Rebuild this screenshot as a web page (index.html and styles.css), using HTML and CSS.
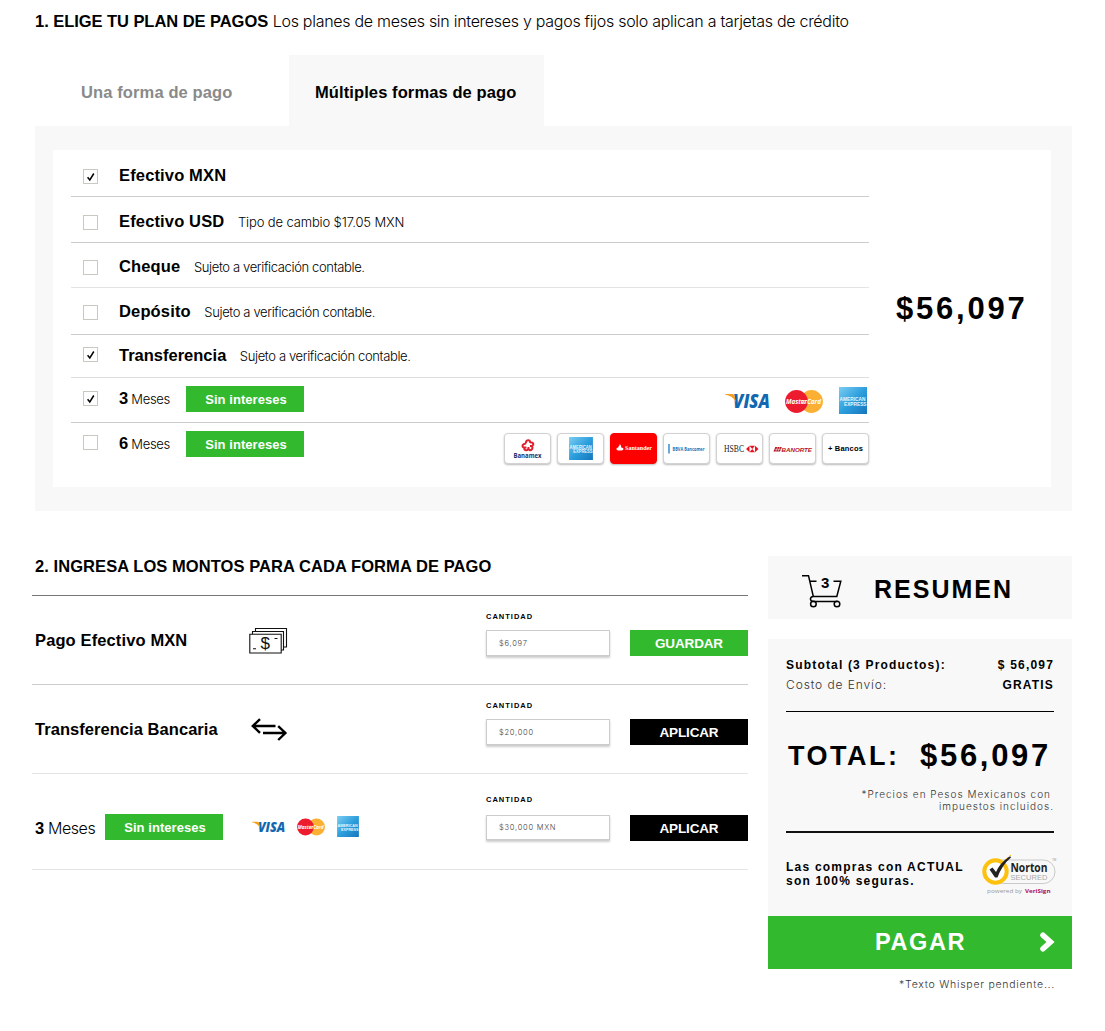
FILE: index.html
```html
<!DOCTYPE html>
<html lang="es">
<head>
<meta charset="utf-8">
<title>Plan de pagos</title>
<link rel="stylesheet" href="styles.css">
</head>
<body>
<svg class="defs" width="0" height="0" aria-hidden="true">
  <defs>
    <linearGradient id="amexfill" x1="0" y1="0" x2="1" y2="1">
      <stop offset="0" stop-color="#7ccdf2"/>
      <stop offset=".5" stop-color="#2d9fdd"/>
      <stop offset="1" stop-color="#1575bd"/>
    </linearGradient>
    <symbol id="visa" viewBox="0 0 46 16">
      <text x="8" y="15" class="visa-text" textLength="37" lengthAdjust="spacingAndGlyphs">VISA</text>
      <path d="M0 1h7.500q1.400 0 1.800 1.400L11 9Q7.500 3 0 1.600z" fill="#f5a01f"/>
    </symbol>
    <symbol id="mastercard" viewBox="0 0 38 23">
      <circle cx="26.500" cy="11.500" r="11.400" fill="#fbb033"/>
      <circle cx="11.500" cy="11.500" r="11.400" fill="#ec1c2e"/>
      <path d="M16 10.500h6M15.800 13h6" stroke="#fbb033" stroke-width="1"/>
      <text x="1" y="14" class="mc-text" textLength="35" lengthAdjust="spacingAndGlyphs">MasterCard</text>
    </symbol>
    <symbol id="amex" viewBox="0 0 28 27">
      <rect width="28" height="27" fill="url(#amexfill)"/>
      <text x=".5" y="14" class="amex-text" textLength="26" lengthAdjust="spacingAndGlyphs">AMERICAN</text>
      <text x="5" y="19" class="amex-text" textLength="22.500" lengthAdjust="spacingAndGlyphs">EXPRESS</text>
    </symbol>
    <symbol id="check" viewBox="0 0 15 15">
      <path d="M4.600 8.200 6.800 11 10.800 4.500" fill="none" stroke="#000" stroke-width="1.500"/>
    </symbol>
  </defs>
</svg>

<main class="page">
  <h1 class="heading">1. ELIGE TU PLAN DE PAGOS <span class="heading-note">Los planes de meses sin intereses y pagos fijos solo aplican a tarjetas de crédito</span></h1>

  <nav class="tabs">
    <a class="tab">Una forma de pago</a>
    <a class="tab tab-active">Múltiples formas de pago</a>
  </nav>

  <section class="panel">
    <div class="panel-body">
      <ul class="options">
        <li class="option option-mxn"><span class="box"><svg><use href="#check"/></svg></span><b class="name">Efectivo MXN</b></li>
        <li class="option option-usd"><span class="box"></span><b class="name">Efectivo USD</b><span class="hint hint-usd">Tipo de cambio $17.05 MXN</span></li>
        <li class="option option-cheque"><span class="box"></span><b class="name">Cheque</b><span class="hint">Sujeto a verificación contable.</span></li>
        <li class="option option-deposito"><span class="box"></span><b class="name">Depósito</b><span class="hint">Sujeto a verificación contable.</span></li>
        <li class="option option-transfer"><span class="box"><svg><use href="#check"/></svg></span><b class="name name-transfer">Transferencia</b><span class="hint">Sujeto a verificación contable.</span></li>
        <li class="option option-3"><span class="box"><svg><use href="#check"/></svg></span><span class="term"><b>3</b> Meses</span><span class="tag">Sin intereses</span>
          <span class="cards">
            <svg class="visa"><use href="#visa"/></svg>
            <svg class="mastercard"><use href="#mastercard"/></svg>
            <svg class="amex"><use href="#amex"/></svg>
          </span>
        </li>
        <li class="option option-6"><span class="box"></span><span class="term"><b>6</b> Meses</span><span class="tag">Sin intereses</span>
          <span class="banks">
            <span class="bank"><svg width="44" height="28" viewBox="0 0 44 28">
              <g fill="none" stroke="#e0202e" stroke-width="2"><path d="M20 8.500q-.5-3 2-3.200t2 2.700M24 7.500q3-.5 3.300 1.500T24 11M24.500 11q3 .5 1.600 3T22.500 14M22.500 12q0 3.500-2.500 3.200T18.500 12M20.500 12.500q-4 .5-4-1.500T20 8.500"/></g>
              <text x="7.500" y="23" class="banamex" textLength="28" lengthAdjust="spacingAndGlyphs">Banamex</text></svg></span>
            <span class="bank"><svg width="24" height="23"><use href="#amex"/></svg></span>
            <span class="bank bank-red"><svg width="44" height="28" viewBox="0 0 44 28">
              <path d="M7.800 9q1.800 1.700 1.400 3.400 2.500.3 2.300 1.600-.3 1.500-3.600 1.500t-3.500-1.500q0-1.100 1.800-1.500 0-1.200 1.200-1.800z" fill="#fff"/>
              <text x="13" y="15" class="santander" textLength="27" lengthAdjust="spacingAndGlyphs">Santander</text></svg></span>
            <span class="bank"><svg width="44" height="28" viewBox="0 0 44 28">
              <path d="M4 9v9.500" stroke="#1680c4" stroke-width="1.300"/>
              <text x="7.500" y="15.700" class="bbva" textLength="32" lengthAdjust="spacingAndGlyphs">BBVA Bancomer</text></svg></span>
            <span class="bank"><svg width="44" height="28" viewBox="0 0 44 28">
              <text x="6" y="17.300" class="hsbc" textLength="20" lengthAdjust="spacingAndGlyphs">HSBC</text>
              <path d="M31.500 10.800v6.400L28 14zM37 10.800v6.400l3.500-3.200zM31.500 10.800H37l-5.500 6.400H37z" fill="#e8111f"/></svg></span>
            <span class="bank"><svg width="44" height="28" viewBox="0 0 44 28">
              <path d="M2.500 16.500 4.300 12h6.500L9 16.500z" fill="#b5121f"/><path d="M3.500 14.300h6.500M6.600 12l-1.800 4.500M8.800 12 7 16.500" stroke="#fff" stroke-width=".5"/>
              <text x="10.500" y="16.500" class="banorte" textLength="30.500" lengthAdjust="spacingAndGlyphs">BANORTE</text></svg></span>
            <span class="bank bank-more">+ Bancos</span>
          </span>
        </li>
      </ul>
      <p class="amount">$56,097</p>
    </div>
  </section>

  <div class="columns">
    <section class="amounts">
      <h2 class="heading heading-2">2. INGRESA LOS MONTOS PARA CADA FORMA DE PAGO</h2>
      <div class="entry entry-cash">
        <div class="entry-name cash-name">Pago Efectivo MXN</div>
        <div class="entry-icon"><svg width="39" height="26" viewBox="0 0 39 26" fill="#fff" stroke="#111" stroke-width="1.100">
          <path d="M6.500.5h31v18.500H6.500z"/><path d="M3.500 3.500h31V22h-31z"/><path d="M.8 6.300h31.400V25H.8z"/>
          <path d="M4 20.700h3M25.500 10.500h3"/><text x="11.500" y="21" class="cash-sign" stroke="none">$</text></svg></div>
        <div class="field"><label>CANTIDAD</label><div class="input">$6,097</div></div>
        <button class="btn btn-green">GUARDAR</button>
      </div>
      <div class="entry entry-bank">
        <div class="entry-name bank-name">Transferencia Bancaria</div>
        <div class="entry-icon arrows"><svg width="37" height="24" viewBox="0 0 37 24" fill="none" stroke="#000" stroke-width="2.400">
          <path d="M9 1.200 1.800 8 9 14.800M1.800 8h22.700M27.200 8.200 34.400 15l-7.200 7M34.400 15H12"/></svg></div>
        <div class="field"><label>CANTIDAD</label><div class="input">$20,000</div></div>
        <button class="btn">APLICAR</button>
      </div>
      <div class="entry entry-months">
        <div class="entry-name"><span class="months"><b>3</b> Meses</span><span class="tag">Sin intereses</span></div>
        <div class="entry-icon cards-small">
          <svg class="visa"><use href="#visa"/></svg>
          <svg class="mastercard"><use href="#mastercard"/></svg>
          <svg class="amex"><use href="#amex"/></svg>
        </div>
        <div class="field"><label>CANTIDAD</label><div class="input input-months">$30,000 MXN</div></div>
        <button class="btn">APLICAR</button>
      </div>
    </section>

    <aside class="summary">
      <header class="summary-head">
        <svg width="42" height="36" viewBox="0 0 42 36" fill="none" stroke="#000" stroke-width="1.500">
          <path d="M1 2.700h6.500L12.300 23.500h23.500l4-15.300H32.500M9 8.200h6.500M12.300 23.500c-3.800.3-3.800 4.800 0 5h24.200"/>
          <circle cx="12.400" cy="31" r="2.800"/><circle cx="36" cy="31" r="2.800"/>
          <text x="20" y="14.500" class="cart-count" stroke="none">3</text></svg>
        <span>RESUMEN</span>
      </header>
      <div class="summary-body">
        <dl class="lines">
          <dt class="subtotal">Subtotal (3 Productos):</dt><dd class="subtotal-sum">$ 56,097</dd>
          <dt class="shipping">Costo de Envío:</dt><dd class="gratis">GRATIS</dd>
        </dl>
        <p class="total"><span>TOTAL:</span><span class="total-sum">$56,097</span></p>
        <p class="terms"><span class="terms-first">*Precios en Pesos Mexicanos con</span><br>impuestos incluidos.</p>
        <div class="secure">
          <p>Las compras con ACTUAL<br>son 100% seguras.</p>
          <svg width="75" height="42" viewBox="0 0 75 42">
            <rect x="9" y="6" width="64" height="23.500" rx="11.700" fill="#f8f8f8" stroke="#c9c9c9"/>
            <circle cx="13.500" cy="17.500" r="11.200" fill="#fff" stroke="#fdc10e" stroke-width="4"/>
            <path d="M7.500 15.500 10.500 13.500l3.500 4.500Q18 9 26 3.500L28 2l1 1.500Q20 11 15.500 23.500h-2.500z" fill="#222"/>
            <path d="M24 5l2-2M27 2.500l2-1.500" stroke="#fdc10e"/>
            <text x="28.500" y="17.500" class="norton" textLength="37" lengthAdjust="spacingAndGlyphs">Norton</text>
            <text x="28.500" y="26.300" class="secured" textLength="37" lengthAdjust="spacingAndGlyphs">SECURED</text>
            <text x="5" y="38.500" class="powered" textLength="35" lengthAdjust="spacingAndGlyphs">powered by</text>
            <text x="43" y="38.500" class="verisign" textLength="25.500" lengthAdjust="spacingAndGlyphs">VeriSign</text>
            <text x="70" y="6.500" class="tm">TM</text>
          </svg>
        </div>
      </div>
      <button class="pay"><span>PAGAR</span><svg width="17" height="20" viewBox="0 0 17 20" fill="none" stroke="#fff" stroke-width="5.500" stroke-linecap="round"><path d="M4 3.200l7.500 6.800L4 16.800"/></svg></button>
      <p class="whisper">*Texto Whisper pendiente...</p>
    </aside>
  </div>
</main>
</body>
</html>
```
FILE: styles.css
```css
* { box-sizing: border-box; }

body {
  margin: 0;
  background: #fff;
  color: #000;
  font-family: "Liberation Sans", Arial, sans-serif;
}

h1, h2, p, ul, dl, dd { margin: 0; padding: 0; }
button { border: 0; padding: 0; font-family: inherit; }
svg { display: block; }
.defs { position: absolute; }

.page { width: 1105px; height: 1031px; padding: 0 33px 0 35px; }

.heading {
  padding-top: 11px;
  height: 55px;
  font-size: 16.500px;
  line-height: 20px;
  letter-spacing: -.05px;
  white-space: nowrap;
}

.heading-note, .hint, .term, .months, .shipping, .terms, .whisper, .input {
  font-family: Inter, "Liberation Sans", sans-serif;
  font-weight: 300;
}

.heading-note { font-size: 16px; letter-spacing: -.28px; }

.tabs { display: flex; height: 71px; font-size: 16.500px; font-weight: bold; line-height: 75px; }
.tab { width: 254px; padding-left: 46px; color: #8a8a8a; letter-spacing: .12px; }
.tab-active { width: 255px; padding-left: 26px; color: #000; background: #f8f8f8; letter-spacing: .1px; }

.panel { height: 385px; padding: 24px 21px 24px 18px; background: #f8f8f8; }
.panel-body { display: flex; height: 337px; padding-left: 18px; background: #fff; }

.options { width: 798px; list-style: none; }
.option { display: flex; padding-left: 12px; border-bottom: 1px solid #ccc; line-height: 26px; white-space: nowrap; }
.option-mxn { height: 47px; padding-top: 12px; }
.option-usd { height: 46px; padding-top: 11px; }
.option-cheque { height: 45px; padding-top: 10px; border-color: #e4e4e4; }
.option-deposito { height: 47px; padding-top: 10px; }
.option-transfer { height: 43px; padding-top: 7px; border-color: #dedede; }
.option-3 { height: 45px; padding-top: 8px; }
.option-6 { height: 65px; padding-top: 8px; border: 0; }

.box { width: 15px; height: 15px; margin: 7px 21px 0 0; border: 1px solid #c9c9bf; background: #fff; }
.box svg { width: 15px; height: 15px; margin: -1px; }
.option-transfer .box, .option-3 .box { margin-top: 5px; }
.option-6 .box { margin-top: 4px; }

.name { font-size: 16.500px; letter-spacing: .15px; }
.name-transfer { letter-spacing: 0; }
.hint { margin-left: 13.500px; padding-top: 1px; font-size: 13px; letter-spacing: -.36px; }
.hint-usd { letter-spacing: -.13px; }
.term { width: 67px; font-size: 13px; letter-spacing: -.3px; }
.term b { font: bold 16.500px "Liberation Sans", sans-serif; }

.tag { width: 118px; height: 26px; padding-left: 2px; background: #33b92d; color: #fff; font-size: 13px; font-weight: bold; line-height: 27px; text-align: center; letter-spacing: .05px; }

.cards { display: flex; margin-left: auto; padding-right: 2px; }
.cards .visa { width: 46px; height: 16px; margin-top: 7px; }
.cards .mastercard { width: 38px; height: 23px; margin: 4px 16px 0 14px; }
.cards .amex { width: 28px; height: 27px; margin-top: 1px; }

.visa-text { font: italic 800 19px "Open Sans", sans-serif; fill: #1268b0; }
.mc-text { font: italic bold 7.500px "Open Sans", sans-serif; fill: #fff; }
.amex-text { font: bold 5.500px "Liberation Sans", sans-serif; fill: #e6f7ff; }

.banks { display: flex; gap: 6px; margin-left: auto; padding-top: 2px; }
.bank { display: flex; align-items: center; justify-content: center; width: 47px; height: 31px; border: 1px solid #d2d2d2; border-radius: 4px; background: #fff; box-shadow: 0 1px 2px #bbb; }
.bank-red { background: #fe0000; border-color: #fe0000; }
.bank-more { font-size: 7.500px; font-weight: bold; letter-spacing: .2px; }
.banamex { font: bold 6.500px "Open Sans", sans-serif; fill: #17336f; }
.santander { font: bold 6px "Liberation Serif", serif; fill: #fff; }
.bbva { font: bold 4.500px "Open Sans", sans-serif; fill: #1672b5; }
.hsbc { font: 9.500px "Liberation Serif", serif; fill: #222; }
.banorte { font: italic bold 6px "Liberation Sans", sans-serif; fill: #b5121f; }

.amount { margin: 140px 0 0 27px; font-size: 31px; font-weight: bold; line-height: 38px; letter-spacing: 2.800px; }

.columns { display: flex; justify-content: space-between; margin: 45px 0 0 -3px; }
.amounts { width: 716px; }
.heading-2 { height: 40px; padding: 0 0 0 3px; border-bottom: 1px solid #777; letter-spacing: .07px; }

.entry { display: grid; grid-template-columns: 217px 237px 144px 118px; height: 89px; border-bottom: 1px solid #ccc; }
.entry-bank { border-color: #e4e4e4; }
.entry-months { height: 96px; border-color: #e4e4e4; }
.entry-name { padding: 34px 0 0 3px; font-size: 16.500px; font-weight: bold; line-height: 20px; letter-spacing: .05px; white-space: nowrap; }
.cash-name { letter-spacing: .12px; }
.entry-icon { padding-top: 32px; }
.arrows { padding: 33px 0 0 2px; }
.entry-months .entry-name { display: flex; padding-top: 40px; }
.months { width: 70px; font-size: 16px; line-height: 28px; letter-spacing: -.4px; }
.months b { font: bold 16.500px "Liberation Sans", sans-serif; }
.cash-sign { font: 17px "Liberation Sans", sans-serif; fill: #111; }

.cards-small { display: flex; padding: 42px 0 0 3px; }
.cards-small .visa { width: 34px; height: 12px; margin-top: 5px; }
.cards-small .mastercard { width: 28px; height: 18px; margin: 2px 0 0 11px; }
.cards-small .amex { width: 22px; height: 21px; margin-left: 12px; }

.field { padding-top: 16px; }
.field label { display: block; height: 18px; font-size: 7.500px; font-weight: bold; line-height: 10px; letter-spacing: 1px; }
.input { width: 124px; height: 26px; padding-left: 12px; border: 1px solid #ccc; box-shadow: 0 2px 2px #ccc; color: #444; font-size: 7.500px; line-height: 25px; letter-spacing: .75px; }
.entry-months .input { height: 25px; line-height: 24px; }
.entry-months .field { padding-top: 20px; }
.entry-months .field label { height: 21px; line-height: 12px; }
.btn { height: 26px; margin-top: 34px; background: #000; color: #fff; font-size: 13.500px; font-weight: bold; line-height: 28px; letter-spacing: -.15px; }
.btn-green { background: #33b92d; }
.entry-months .btn { margin-top: 41px; }

.summary { width: 304px; }
.summary-head { display: flex; height: 63px; padding: 17px 0 0 33px; background: #f8f8f8; font-size: 25px; font-weight: bold; line-height: 32px; letter-spacing: 2px; }
.summary-head span { margin-left: 31px; }
.summary-head svg { margin-right: 0; }
.cart-count { font: bold 15px "Liberation Sans", sans-serif; letter-spacing: 0; fill: #000; }

.summary-body { height: 277px; margin-top: 20px; padding: 16px 18px 0; background: #f8f8f8; }
.lines { display: grid; grid-template-columns: 1fr auto; align-content: start; height: 57px; border-bottom: 1px solid #000; font-size: 12px; font-weight: bold; line-height: 20px; letter-spacing: 1.180px; }
.shipping { letter-spacing: .9px; color: #333; }
.lines dd { text-align: right; }
.total { display: flex; justify-content: space-between; padding: 24px 3px 0 2px; font-size: 27px; font-weight: bold; line-height: 40px; letter-spacing: 2.500px; }
.total-sum { font-size: 31px; letter-spacing: 2.700px; }
.terms { height: 57px; padding-top: 12px; border-bottom: 2px solid #111; color: #333; font-size: 10px; line-height: 12px; letter-spacing: 1px; text-align: right; }
.terms-first { padding-right: 3px; }
.secure { display: flex; justify-content: space-between; margin-right: -3px; padding-top: 22px; }
.secure p { padding-top: 5px; font-size: 12px; font-weight: bold; line-height: 14px; letter-spacing: 1.220px; white-space: nowrap; }
.secure svg { margin-top: -1px; }
.norton { font: bold 11.500px "Open Sans", sans-serif; fill: #222; }
.secured { font: 8px "Liberation Sans", sans-serif; fill: #aaa; }
.powered { font: 6px "Open Sans", sans-serif; fill: #999; }
.verisign { font: bold 6px "Open Sans", sans-serif; fill: #b01050; }
.tm { font: 3px "Liberation Sans", sans-serif; fill: #999; }

.pay { display: flex; align-items: center; justify-content: space-between; width: 304px; height: 53px; padding: 0 16px 1px 107px; background: #33b92d; color: #fff; font-size: 23.500px; font-weight: bold; letter-spacing: 1.600px; }
.whisper { padding: 9px 17px 0 0; color: #333; font-size: 10.500px; line-height: 14px; letter-spacing: .74px; text-align: right; }
```
